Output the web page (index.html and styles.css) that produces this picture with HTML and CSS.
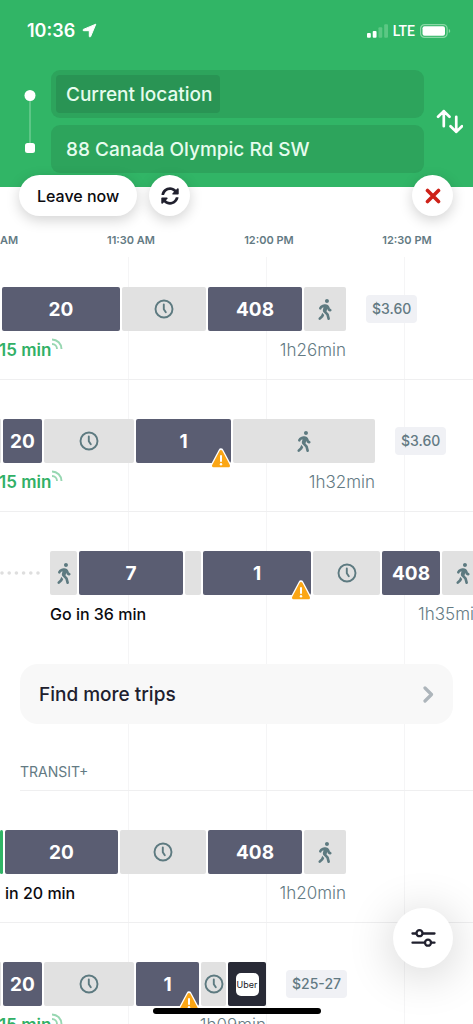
FILE: index.html
```html
<!DOCTYPE html>
<html lang="en">
<head>
<meta charset="utf-8">
<meta name="viewport" content="width=device-width, initial-scale=1">
<title>Trip planner</title>
<link rel="stylesheet" href="styles.css">
</head>
<body>
<svg class="sprite" aria-hidden="true">
  <symbol id="walk" viewBox="0 0 320 512"><path d="M208 96c26.5 0 48-21.5 48-48S234.500 0 208 0s-48 21.500-48 48 21.500 48 48 48zm94.500 149.100l-23.300-11.800-9.700-29.400c-14.700-44.600-55.700-75.800-102.200-75.900-36-.1-55.900 10.100-93.300 25.200-21.600 8.700-39.300 25.200-49.700 46.200L17.600 213c-7.800 15.800-1.500 35 14.200 42.900 15.600 7.900 34.600 1.500 42.500-14.300L81 228c3.500-7 9.300-12.500 16.500-15.400l26.800-10.800-15.200 60.700c-5.200 20.800.4 42.900 14.900 58.800l59.900 65.400c7.200 7.900 12.300 17.400 14.900 27.700l18.300 73.300c4.300 17.100 21.700 27.600 38.800 23.300 17.100-4.300 27.600-21.700 23.300-38.800l-22.200-89c-2.600-10.300-7.700-19.900-14.900-27.700l-45.500-49.700 17.200-68.700 5.500 16.500c5.300 16.100 16.700 29.400 31.700 37l23.300 11.800c15.600 7.900 34.600 1.500 42.500-14.300 7.700-15.700 1.400-35.100-14.300-43zM73.600 385.800c-3.200 8.100-8 15.400-14.200 21.500l-50 50.100c-12.500 12.500-12.500 32.800 0 45.300s32.700 12.500 45.200 0l59.400-59.400c6.100-6.100 10.900-13.400 14.200-21.500l13.500-33.800c-55.300-60.300-38.700-41.800-47.400-53.700l-20.700 51.500z"/></symbol>
  <symbol id="clock" viewBox="0 0 20 20"><circle cx="10" cy="10" r="8.500" fill="none" stroke="currentColor" stroke-width="1.900"/><path d="M9.800 5.500v4.700l2 3" fill="none" stroke="currentColor" stroke-width="1.900" stroke-linecap="round" stroke-linejoin="round"/></symbol>
  <symbol id="alert" viewBox="0 0 22 21"><path d="M11 2.800 19 18H3z" fill="#fff" stroke="#fff" stroke-width="5" stroke-linejoin="round"/><path d="M11 3.500 18.500 17.800h-15z" fill="#fba615" stroke="#fba615" stroke-width="3" stroke-linejoin="round"/><path d="M11 8v5" stroke="#fff" stroke-width="2" stroke-linecap="round"/><circle cx="11" cy="16.200" r="1.200" fill="#fff"/></symbol>
  <symbol id="live" viewBox="0 0 12 12"><path d="M1 1.500A9.500 9.500 0 0 1 10.500 11M1 6a5 5 0 0 1 5 5" fill="none" stroke="currentColor" stroke-width="1.900"/></symbol>
</svg>

<div class="screen">
  <header class="header">
    <div class="status">
      <span class="clock-time">10:36</span>
      <svg class="locate" viewBox="0 0 15 15"><path d="M13.800 1.200 8.600 13.600c-.3.700-1.300.5-1.300-.3V7.700H1.700c-.8 0-1-1-.3-1.300z" fill="#fff" stroke="#fff" stroke-linejoin="round"/></svg>
      <span class="status-right">
        <svg class="signal" viewBox="0 0 22 14"><rect x="0" y="9" width="4" height="5" rx="1" fill="#fff"/><rect x="6" y="7" width="4" height="7" rx="1" fill="#fff"/><rect x="12" y="3" width="4" height="11" rx="1" fill="#5cc784"/><rect x="18" y="0" width="4" height="14" rx="1" fill="#5cc784"/></svg>
        <span class="network">LTE</span>
        <svg class="battery" viewBox="0 0 31 14"><rect x=".6" y=".6" width="26.500" height="12.800" rx="4" fill="none" stroke="#8ad8a6" stroke-width="1.200"/><rect x="2.500" y="2.300" width="22.500" height="9.400" rx="2" fill="#fff"/><path d="M28.800 5c1.900.6 1.900 3.400 0 4z" fill="#8ad8a6"/></svg>
      </span>
    </div>
    <form class="route">
      <svg class="route-marks" viewBox="0 0 12 66"><path d="M6 6v54" stroke="#8ad8a6"/><circle cx="6" cy="6.500" r="5.500" fill="#fff"/><rect x="1" y="54" width="10" height="10" rx="2.500" fill="#fff"/></svg>
      <div class="fields">
        <div class="field"><input class="place place-chip" type="text" aria-label="From" value="Current location"></div>
        <div class="field"><input class="place" type="text" aria-label="To" value="88 Canada Olympic Rd SW"></div>
      </div>
      <button class="swap" type="button" aria-label="Swap start and destination">
        <svg viewBox="0 0 26 24" fill="none" stroke="#fff" stroke-width="2.600" stroke-linecap="round" stroke-linejoin="round"><path d="M7.500 16.500V2M2 7.500 7.500 2 13 7.500M19.500 7.500V22M14 16.500l5.500 5.500 5.500-5.500"/></svg>
      </button>
    </form>
  </header>

  <div class="toolbar">
    <button class="pill" type="button">Leave now</button>
    <button class="round" type="button" aria-label="Refresh"><svg class="refresh" viewBox="0 0 512 512"><path d="M370.720 133.280C339.458 104.008 298.888 87.962 255.848 88c-77.458.068-144.328 53.178-162.791 126.850-1.344 5.363-6.122 9.150-11.651 9.150H24.103c-7.498 0-13.194-6.807-11.807-14.176C33.933 94.924 134.813 8 256 8c66.448 0 126.791 26.136 171.315 68.685L463.030 40.970C478.149 25.851 504 36.559 504 57.941V192c0 13.255-10.745 24-24 24H345.941c-21.382 0-32.090-25.851-16.971-40.971l41.750-41.749zM32 296h134.059c21.382 0 32.090 25.851 16.971 40.971l-41.750 41.750c31.262 29.273 71.835 45.319 114.876 45.280 77.418-.07 144.315-53.144 162.787-126.849 1.344-5.363 6.122-9.150 11.651-9.150h57.304c7.498 0 13.194 6.807 11.807 14.176C478.067 417.076 377.187 504 256 504c-66.448 0-126.791-26.136-171.315-68.685L48.970 471.030C33.851 486.149 8 475.441 8 454.059V320c0-13.255 10.745-24 24-24z"/></svg></button>
    <button class="round close" type="button" aria-label="Close"><svg class="cross" viewBox="0 0 16 16"><path d="M2.500 2.500l11 11M13.500 2.500l-11 11" stroke="#ce2118" stroke-width="3.600" stroke-linecap="round"/></svg></button>
  </div>

  <div class="times"><span>AM</span><span>11:30 AM</span><span>12:00 PM</span><span>12:30 PM</span></div>

  <main class="results">
    <article class="trip">
      <div class="plan" style="margin-left:-1px">
        <div class="legs">
          <span class="leg" style="width:1px"></span>
          <span class="leg ride" style="width:118px">20</span>
          <span class="leg" style="width:84px"><svg class="clock"><use href="#clock"/></svg></span>
          <span class="leg ride" style="width:94px">408</span>
          <span class="leg" style="width:42px"><svg class="walk"><use href="#walk"/></svg></span>
        </div>
        <div class="caption"><span class="depart now">15 min<svg class="live"><use href="#live"/></svg></span><span class="duration">1h26min</span></div>
      </div>
      <span class="price">$3.60</span>
    </article>

    <article class="trip">
      <div class="plan" style="margin-left:-1px">
        <div class="legs">
          <span class="leg" style="width:2px"></span>
          <span class="leg ride" style="width:39px">20</span>
          <span class="leg" style="width:90px"><svg class="clock"><use href="#clock"/></svg></span>
          <span class="leg ride" style="width:95px">1<svg class="alert"><use href="#alert"/></svg></span>
          <span class="leg" style="width:142px"><svg class="walk"><use href="#walk"/></svg></span>
        </div>
        <div class="caption"><span class="depart now">15 min<svg class="live"><use href="#live"/></svg></span><span class="duration">1h32min</span></div>
      </div>
      <span class="price">$3.60</span>
    </article>

    <article class="trip last">
      <svg class="lead" viewBox="0 0 50 4"><path d="M2 2h38" stroke="#dedede" stroke-width="3.600" stroke-linecap="round" stroke-dasharray="0 7.200"/></svg>
      <div class="plan">
        <div class="legs">
          <span class="leg" style="width:27px"><svg class="walk"><use href="#walk"/></svg></span>
          <span class="leg ride" style="width:104px">7</span>
          <span class="leg" style="width:16px"></span>
          <span class="leg ride" style="width:108px">1<svg class="alert"><use href="#alert"/></svg></span>
          <span class="leg" style="width:67px"><svg class="clock"><use href="#clock"/></svg></span>
          <span class="leg ride" style="width:58px">408</span>
          <span class="leg" style="width:42px"><svg class="walk"><use href="#walk"/></svg></span>
        </div>
        <div class="caption"><span class="depart">Go in 36 min</span><span class="duration">1h35min</span></div>
      </div>
    </article>

    <button class="more" type="button"><span>Find more trips</span><svg class="chevron" viewBox="0 0 11 17"><path d="M2 2l6.500 6.500L2 15" fill="none" stroke="#adb5bb" stroke-width="3.200" stroke-linecap="round" stroke-linejoin="round"/></svg></button>

    <h2 class="group">TRANSIT+</h2>

    <article class="trip">
      <div class="plan">
        <div class="legs">
          <span class="leg express" style="width:3px"></span>
          <span class="leg ride" style="width:113px">20</span>
          <span class="leg" style="width:86px"><svg class="clock"><use href="#clock"/></svg></span>
          <span class="leg ride" style="width:94px">408</span>
          <span class="leg" style="width:42px"><svg class="walk"><use href="#walk"/></svg></span>
        </div>
        <div class="caption inset"><span class="depart">in 20 min</span><span class="duration">1h20min</span></div>
      </div>
    </article>

    <article class="trip last">
      <div class="plan" style="margin-left:-1px">
        <div class="legs">
          <span class="leg" style="width:2px"></span>
          <span class="leg ride" style="width:39px">20</span>
          <span class="leg" style="width:90px"><svg class="clock"><use href="#clock"/></svg></span>
          <span class="leg ride" style="width:63px">1<svg class="alert"><use href="#alert"/></svg></span>
          <span class="leg" style="width:25px"><svg class="clock"><use href="#clock"/></svg></span>
          <span class="leg car" style="width:38px"><span class="brand">Uber</span></span>
        </div>
        <div class="caption"><span class="depart now">15 min<svg class="live"><use href="#live"/></svg></span><span class="duration">1h09min</span></div>
      </div>
      <span class="price">$25-27</span>
    </article>
  </main>

  <button class="filters" type="button" aria-label="Trip options"><svg viewBox="0 0 26 20" fill="#fff" stroke="#20202e" stroke-width="2.300" stroke-linecap="round"><path d="M2 5.500h22M2 14.700h22"/><circle cx="9" cy="5.200" r="3"/><circle cx="17.500" cy="14.700" r="3"/></svg></button>
  <div class="home-bar"></div>
</div>
</body>
</html>
```
FILE: styles.css
```css
* { box-sizing: border-box; }

body {
  margin: 0;
  background: #fff;
  color: #0b0b0f;
  font-family: Inter, Roboto, sans-serif;
  font-size: 16px;
}

button, input {
  font: inherit;
  color: inherit;
  border: 0;
  margin: 0;
  padding: 0;
  background: none;
}

svg { display: block; flex: none; }
.sprite { position: absolute; width: 0; height: 0; }

.screen {
  position: relative;
  height: 100vh;
  overflow: hidden;
}

/* Header */
.header {
  background: #31b566;
  color: #fff;
  padding-bottom: 14px;
}

.status {
  display: flex;
  align-items: center;
  height: 70px;
  padding: 0 22px 9px 27px;
}
.clock-time { font-size: 18px; font-weight: 600; }
.locate { width: 15px; height: 15px; margin-left: 7px; }
.status-right {
  display: flex;
  align-items: center;
  gap: 5px;
  margin-left: auto;
}
.signal { width: 21px; height: 14px; }
.network {
  font-family: Roboto, sans-serif;
  font-size: 14px;
  font-weight: 500;
}
.battery { width: 31px; height: 14px; }

.route {
  display: flex;
  align-items: center;
  padding: 0 10px 0 24px;
}
.route-marks { width: 12px; height: 66px; }
.fields {
  flex: 1;
  min-width: 0;
  display: grid;
  gap: 7px;
  margin: 0 12px 0 15px;
}
.field {
  height: 48px;
  padding: 5px;
  border-radius: 9px;
  background: #2da45c;
}
.place {
  width: 100%;
  height: 38px;
  padding: 0 8px 0 10px;
  border-radius: 4px;
  color: #e6fcee;
  font-size: 19px;
  font-weight: 500;
}
.place-chip { width: 164px; background: #299454; }
.swap { width: 27px; height: 26px; }
.swap svg { width: 27px; height: 25px; }

/* Floating controls */
.toolbar {
  position: relative;
  display: flex;
  gap: 12px;
  margin-top: -12px;
  padding: 0 20px 0 19px;
}
.pill, .round {
  height: 41px;
  border-radius: 21px;
  background: #fff;
  box-shadow: 0 4px 14px rgba(0, 0, 0, .18);
}
.pill { padding: 0 18px; font-weight: 500; }
.round {
  display: grid;
  place-items: center;
  width: 41px;
}
.close { margin-left: auto; }
.refresh { width: 18px; height: 18px; fill: #20202e; }
.cross { width: 16px; height: 16px; }

/* Timeline */
.times {
  display: grid;
  grid-template-columns: 62px repeat(3, 138px);
  padding-top: 16px;
  color: #637a83;
  font-size: 11px;
  font-weight: 600;
  line-height: 16px;
  text-align: center;
}
.times span:first-child { text-align: left; }

.results {
  background: linear-gradient(to right, #f5f5f6 1px, transparent 1px) 128px 9px / 138px 100% repeat-x;
}

.trip {
  display: flex;
  align-items: flex-start;
  padding: 39px 0 17px;
  border-bottom: 1px solid #efeff0;
}
.last { border-bottom-color: transparent; }
.plan { flex: none; }
.legs { display: flex; gap: 2px; }
.leg {
  position: relative;
  display: grid;
  place-items: center;
  height: 44px;
  border-radius: 2px;
  background: #e1e1e1;
  color: #5d7a80;
}
.ride {
  background: #5a5d72;
  color: #fff;
  font-size: 19px;
  font-weight: 700;
}
.express { background: #31b566; }
.car { background: #282a36; }
.brand {
  width: 23px;
  border-radius: 5px;
  background: #fff;
  color: #17171c;
  font-size: 9px;
  line-height: 23px;
  text-align: center;
}
.walk { width: 14px; height: 21px; fill: currentColor; }
.clock { width: 20px; height: 20px; }
.alert {
  position: absolute;
  right: -1px;
  bottom: -6px;
  width: 22px;
  height: 21px;
  overflow: visible;
}

.caption {
  display: flex;
  justify-content: space-between;
  margin-top: 7px;
  line-height: 24px;
}
.inset { padding-left: 5px; }
.depart { display: flex; font-weight: 500; }
.now {
  color: #31b066;
  font-size: 17px;
  font-weight: 600;
}
.live { width: 12px; height: 12px; opacity: .5; }
.duration {
  color: #637a83;
  font-size: 17px;
  font-weight: 300;
}

.price {
  flex: none;
  margin: 8px 0 0 20px;
  padding: 0 6px;
  border-radius: 4px;
  background: #f0f1f5;
  color: #637a83;
  font-size: 14px;
  font-weight: 500;
  line-height: 28px;
}

.lead { width: 50px; height: 4px; margin-top: 20px; }

.more {
  display: flex;
  align-items: center;
  justify-content: space-between;
  width: calc(100% - 40px);
  height: 60px;
  margin: 20px 20px 0;
  padding: 0 19px;
  border-radius: 18px;
  background: #f8f8f8;
  color: #20202e;
  font-size: 19px;
  font-weight: 500;
}
.chevron { width: 11px; height: 17px; }

.group {
  margin: 38px 0 0 20px;
  padding-bottom: 8px;
  border-bottom: 1px solid #efeff0;
  color: #637a83;
  font-size: 14px;
  font-weight: 400;
  line-height: 20px;
}

/* Overlays */
.filters {
  position: absolute;
  right: 20px;
  bottom: 56px;
  display: grid;
  place-items: center;
  width: 60px;
  height: 60px;
  border-radius: 50%;
  background: #fff;
  box-shadow: 0 6px 48px rgba(0, 0, 0, .2);
}
.filters svg { width: 27px; height: 20px; }
.home-bar {
  position: absolute;
  bottom: 10px;
  left: 50%;
  width: 168px;
  height: 6px;
  margin-left: -84px;
  border-radius: 3px;
  background: #000;
}
```
